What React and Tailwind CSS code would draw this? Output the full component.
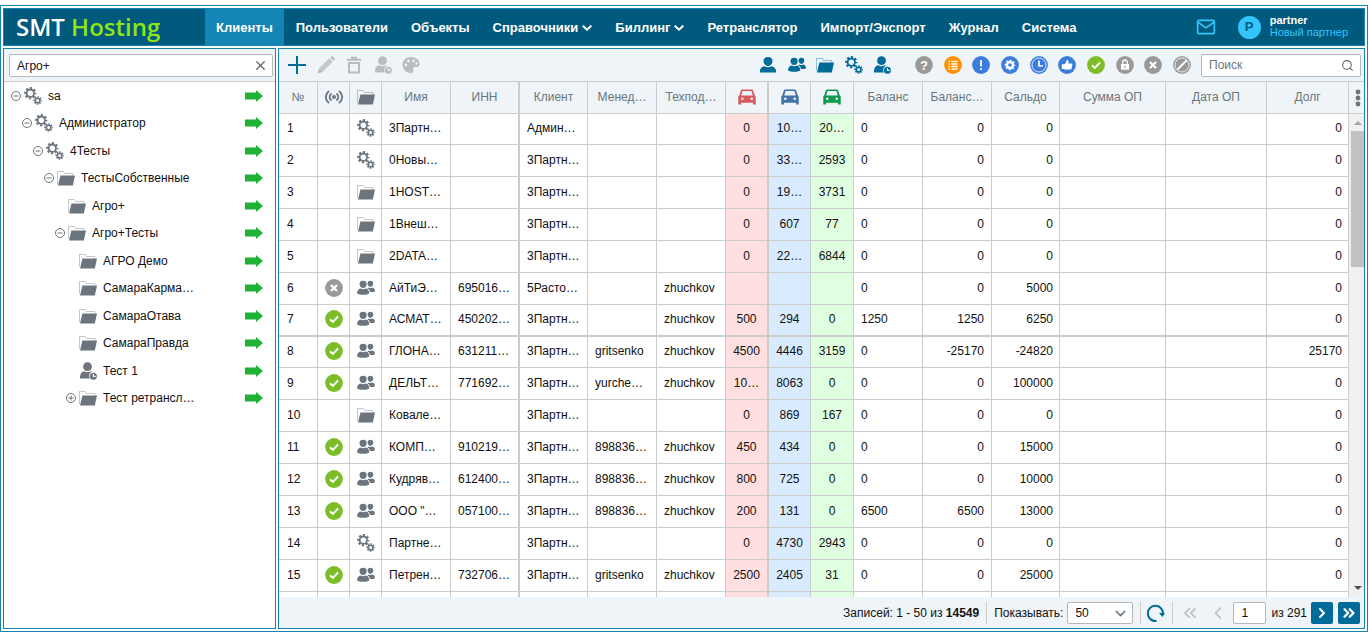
import { useState } from "react";
import { FiMail } from "react-icons/fi";
import {
  ChevronDown,
  ChevronLeft,
  ChevronRight,
  ChevronsLeft,
  ChevronsRight,
  Search,
  X,
} from "lucide-react";

const NAV = [
  { title: "Клиенты", active: true },
  { title: "Пользователи" },
  { title: "Объекты" },
  { title: "Справочники", menu: true },
  { title: "Биллинг", menu: true },
  { title: "Ретранслятор" },
  { title: "Импорт/Экспорт" },
  { title: "Журнал" },
  { title: "Система" },
];

const TREE = [
  { level: 0, icon: "gears", name: "sa", toggle: "minus" },
  { level: 1, icon: "gears", name: "Администратор", toggle: "minus" },
  { level: 2, icon: "gears", name: "4Тесты", toggle: "minus" },
  { level: 3, icon: "folder", name: "ТестыСобственные", toggle: "minus" },
  { level: 4, icon: "folder", name: "Агро+" },
  { level: 4, icon: "folder", name: "Агро+Тесты", toggle: "minus" },
  { level: 5, icon: "folder", name: "АГРО Демо" },
  { level: 5, icon: "folder", name: "СамараКарма…" },
  { level: 5, icon: "folder", name: "СамараОтава" },
  { level: 5, icon: "folder", name: "СамараПравда" },
  { level: 5, icon: "userClock", name: "Тест 1" },
  { level: 5, icon: "folder", name: "Тест ретрансл…", toggle: "plus" },
];

// status, icon, name, inn, client, manager, support, red, blue, green, balance, balance2, saldo, debt
const ROWS = [
  ["", "gears", "3Партн…", "", "Админ…", "", "", "0", "10…", "20…", "0", "0", "0", "0"],
  ["", "gears", "0Новы…", "", "3Партн…", "", "", "0", "33…", "2593", "0", "0", "0", "0"],
  ["", "folder", "1HOST…", "", "3Партн…", "", "", "0", "19…", "3731", "0", "0", "0", "0"],
  ["", "folder", "1Внеш…", "", "3Партн…", "", "", "0", "607", "77", "0", "0", "0", "0"],
  ["", "folder", "2DATA…", "", "3Партн…", "", "", "0", "22…", "6844", "0", "0", "0", "0"],
  ["off", "users", "АйТиЭ…", "695016…", "5Расто…", "", "zhuchkov", "", "", "", "0", "0", "5000", "0"],
  ["on", "users", "АСМАТ…", "450202…", "3Партн…", "", "zhuchkov", "500", "294", "0", "1250", "1250", "6250", "0"],
  ["on", "users", "ГЛОНА…", "631211…", "3Партн…", "gritsenko", "zhuchkov", "4500", "4446", "3159", "0", "-25170", "-24820", "25170"],
  ["on", "users", "ДЕЛЬТ…", "771692…", "3Партн…", "yurche…", "zhuchkov", "10…", "8063", "0", "0", "0", "100000", "0"],
  ["", "folder", "Ковале…", "", "3Партн…", "", "", "0", "869", "167", "0", "0", "0", "0"],
  ["on", "users", "КОМП…", "910219…", "3Партн…", "898836…", "zhuchkov", "450", "434", "0", "0", "0", "15000", "0"],
  ["on", "users", "Кудряв…", "612400…", "3Партн…", "898836…", "zhuchkov", "800", "725", "0", "0", "0", "10000", "0"],
  ["on", "users", "ООО \"…", "057100…", "3Партн…", "898836…", "zhuchkov", "200", "131", "0", "6500", "6500", "13000", "0"],
  ["", "gears", "Партне…", "", "3Партн…", "", "", "0", "4730", "2943", "0", "0", "0", "0"],
  ["on", "users", "Петрен…", "732706…", "3Партн…", "gritsenko", "zhuchkov", "2500", "2405", "31", "0", "0", "25000", "0"],
];

const COLS = [
  "w-[39px]",
  "w-[32px]",
  "w-[32px]",
  "w-[69px]",
  "w-[69px]",
  "w-[68px]",
  "w-[69px]",
  "w-[69px]",
  "w-[43px]",
  "w-[42px]",
  "w-[43px]",
  "w-[69px]",
  "w-[69px]",
  "w-[68px]",
  "w-[106px]",
  "w-[101px]",
  "w-[82px]",
];

function Svg({ children, className = "" }) {
  return (
    <svg
      viewBox="0 0 18 18"
      className={`block size-[18px] shrink-0 ${className}`}
      fill="currentColor"
      aria-hidden="true"
    >
      {children}
    </svg>
  );
}

function Gears({ className }) {
  return (
    <Svg className={className}>
      <g fill="none" stroke="currentColor">
        <circle cx="6.3" cy="6.2" r="3.7" strokeWidth="1.8" />
        <circle cx="6.3" cy="6.2" r="5.2" strokeWidth="1.900" strokeDasharray="2.2 1.884" strokeDashoffset="1.1" />
        <circle cx="13.600" cy="13.500" r="2.300" strokeWidth="1.600" />
        <circle cx="13.600" cy="13.500" r="3.500" strokeWidth="1.600" strokeDasharray="1.600 1.149" strokeDashoffset=".8" />
      </g>
    </Svg>
  );
}

function Folder({ className }) {
  return (
    <Svg className={className}>
      <path d="M.5 15V2.500h5.700l1.300 2h8.200v2" fill="none" stroke="currentColor" strokeOpacity=".4" />
      <path d="M3.400 6.600H18l-2.200 9.900H1z" />
    </Svg>
  );
}

function Users({ className }) {
  return (
    <Svg className={className}>
      <path d="M10.600 4.500c0-1.800 1-2.800 2.800-2.800s2.800 1 2.800 2.800-1 3.400-2.800 3.400-2.800-1.600-2.800-3.400z" />
      <path d="M11.300 8.400c1.200.8 2.800.8 4 0 1.700.3 2.700 1.700 2.700 3.800-1 .8-3.400 1-5 .8-.3-1.700-1.200-2.800-2.500-3.400z" />
      <path d="M2.500 5c0-2.100 1.300-3.300 3.600-3.300S9.700 2.900 9.700 5 8.400 9 6.100 9 2.500 7.100 2.500 5z" />
      <path d="M3.600 9.400c1.600 1 3.700 1 5.300 0 2.300.5 3.400 2.300 3.400 5-2.500 1.700-9.800 1.700-12.300 0 0-2.700 1.300-4.500 3.600-5z" />
    </Svg>
  );
}

function User({ className }) {
  return (
    <Svg className={className}>
      <path d="M4.500 5C4.500 2.400 6.300 1 9 1s4.500 1.400 4.500 4S11.400 10 9 10 4.500 7.600 4.500 5z" />
      <path d="M5.500 10.200c2 1.500 5 1.500 7 0 3.200.5 4.700 2.600 4.700 6.300H.8c0-3.700 1.500-5.800 4.700-6.300z" />
    </Svg>
  );
}

function UserClock({ className }) {
  return (
    <Svg className={className}>
      <circle cx="8.500" cy="4.700" r="4.400" />
      <path d="M5.200 9.200c2 1.400 4.600 1.400 6.600 0 .6.100 1 .3 1.500.6-1.900.5-3.100 2-3.100 4 0 1 .2 1.800.7 2.600H1c0-4.400 1.300-6.600 4.200-7.200z" />
      <path
        fillRule="evenodd"
        d="M14.400 10.700a3.500 3.500 0 1 0 0 7 3.500 3.500 0 0 0 0-7zm-.6 1.200h1.200v1.900h1.700V15h-2.900z"
      />
    </Svg>
  );
}

function Car({ className }) {
  return (
    <Svg className={className}>
      <path
        fillRule="evenodd"
        d="M4.500 1.500h9c.9 0 1.400.4 1.700 1.200l1.500 4.600 1 1.200v8h-2.700v-1.800H3v1.800H.3v-8l1-1.200 1.500-4.600c.3-.8.800-1.200 1.700-1.200zM4.600 3.100 3.200 7.400h11.600l-1.400-4.300zM4.300 9.400a1.300 1.300 0 1 0 0 2.600 1.300 1.300 0 0 0 0-2.600zm9.400 0a1.300 1.300 0 1 0 0 2.600 1.300 1.300 0 0 0 0-2.600z"
      />
    </Svg>
  );
}

function Signal() {
  return (
    <Svg>
      <circle cx="9" cy="9" r="2" />
      <g fill="none" stroke="currentColor" strokeWidth="1.800" strokeLinecap="round">
        <path d="M6 6a4 4 0 0 0 0 6M12 6a4 4 0 0 1 0 6M3.500 3.500C0 6.300 0 11.700 3.500 14.500M14.500 3.500c3.500 2.800 3.500 8.200 0 11" />
      </g>
    </Svg>
  );
}

function MenuArrow() {
  return (
    <svg viewBox="0 0 10 6" className="h-[6px] w-[10px]" fill="none" stroke="currentColor" strokeWidth="2" aria-hidden="true">
      <path d="m.7.7 4.300 4L9.300.7" />
    </svg>
  );
}

const BADGES = {
  question: (
    <text x="9" y="13.500" textAnchor="middle" fontSize="13" fontWeight="700" fill="#fff">
      ?
    </text>
  ),
  list: (
    <path d="M4.500 5.500h1.500M7.300 5.500h6.200M4.500 8h1.500M7.300 8h6.200M4.500 10.500h1.500M7.300 10.500h6.200M4.500 13h1.500M7.300 13h6.200" stroke="#fff" strokeWidth="1.400" />
  ),
  alert: <path d="M9 4v6.500M9 12.200v1.800" stroke="#fff" strokeWidth="1.800" />,
  gear: (
    <g fill="none" stroke="#fff">
      <circle cx="9" cy="9" r="3" strokeWidth="2.400" />
      <circle cx="9" cy="9" r="4.600" strokeWidth="1.400" strokeDasharray="1.900 1.713" strokeDashoffset=".95" />
    </g>
  ),
  clock: (
    <g fill="none" stroke="#fff">
      <circle cx="9" cy="9" r="7" strokeWidth=".8" />
      <path d="M9 4.500V10h3.800" strokeWidth="1.700" />
    </g>
  ),
  thumb: (
    <path d="M3.800 8.200h2.500c1.300-.8 2-2.200 2.300-4.200 1.900-.3 2.400 1.400 1.700 3.400h3.300c.7 0 .9.500.8 1.100l-.9 4c-.2.700-.5 1-1.200 1H6.500l-.6-.5H3.800z" fill="#fff" />
  ),
  check: <path d="m5 9.300 2.800 2.600L13 6.500" fill="none" stroke="#fff" strokeWidth="1.900" />,
  lock: (
    <g fill="none" stroke="#fff">
      <path d="M6.700 8.500V6.300a2.300 2.300 0 0 1 4.600 0v2.200" strokeWidth="1.300" />
      <path d="M5 8h8v5.700H5z" fill="#fff" stroke="none" />
      <path d="M9 9.800v2.200" stroke="#999" strokeWidth="1.200" />
    </g>
  ),
  cross: <path d="m6 6 6 6M12 6l-6 6" stroke="#fff" strokeWidth="2.200" />,
  ban: (
    <g fill="none" stroke="#fff">
      <circle cx="9" cy="9" r="7" strokeWidth=".8" />
      <path d="M13.500 4.500l-9 9" strokeWidth="1.800" />
    </g>
  ),
};

function Badge({ type, className }) {
  return (
    <Svg className={className}>
      <circle cx="9" cy="9" r="8.900" />
      {BADGES[type]}
    </Svg>
  );
}

const FILTERS = [
  { type: "question", color: "text-[#999999]", label: "Неизвестно" },
  { type: "list", color: "text-[#ff9100]", label: "Список" },
  { type: "alert", color: "text-[#3b7ddd]", label: "Внимание" },
  { type: "gear", color: "text-[#3b7ddd]", label: "Настройка" },
  { type: "clock", color: "text-[#3b7ddd]", label: "Ожидание" },
  { type: "thumb", color: "text-[#3b7ddd]", label: "Одобрено" },
  { type: "check", color: "text-[#7ebc28]", label: "Активен" },
  { type: "lock", color: "text-[#999999]", label: "Заблокирован" },
  { type: "cross", color: "text-[#999999]", label: "Отключен" },
  { type: "ban", color: "text-[#999999]", label: "Запрещен" },
];

const ICONS = { gears: Gears, folder: Folder, users: Users, user: User, userClock: UserClock };

function Header() {
  return (
    <header className="flex h-[38px] shrink-0 items-stretch border border-[#1485b1] bg-[#005a7d]">
      <div className="flex w-[201px] shrink-0 items-center pl-[12px] font-['Open_Sans',sans-serif] text-[24px] leading-6 font-semibold whitespace-pre">
        <span className="text-white">SMT </span>
        <span className="text-[#8fe512]">Hosting</span>
      </div>
      <nav className="flex gap-px text-[13px] font-bold text-white">
        {NAV.map((item) => (
          <button
            key={item.title}
            type="button"
            className={`flex items-center gap-[4px] px-[11px] pt-[2px] whitespace-nowrap ${item.active ? "bg-[#1485b4]" : ""}`}
          >
            {item.title}
            {item.menu && <MenuArrow />}
          </button>
        ))}
      </nav>
      <div className="ml-auto flex items-center pr-[16px]">
        <button type="button" aria-label="Сообщения" className="mr-[22px] text-[#33c5fb]">
          <FiMail className="size-[20px]" />
        </button>
        <div className="mr-[9px] flex size-[23px] items-center justify-center rounded-full bg-[#33c5fb] text-[13px] font-bold text-[#005a7d]">
          P
        </div>
        <div className="pb-[2px] text-[11px] leading-3">
          <p className="font-bold text-white">partner</p>
          <p className="text-[#33c5fb]">Новый партнер</p>
        </div>
      </div>
    </header>
  );
}

function TreeRow({ node }) {
  const Icon = ICONS[node.icon];
  return (
    <li className="flex items-center pr-[12px]" style={{ paddingLeft: 7 + node.level * 11 }}>
      <button type="button" aria-label="Развернуть" className="mr-[3px] size-[10px] shrink-0" disabled={!node.toggle}>
        {node.toggle && (
          <svg viewBox="0 0 10 10" className="block size-[10px]" fill="none" stroke="#6c757d">
            <circle cx="5" cy="5" r="4.500" />
            <path d={node.toggle === "plus" ? "M2.500 5h5M5 2.500v5" : "M2.500 5h5"} />
          </svg>
        )}
      </button>
      <Icon className="mr-[6px] text-[#6c757d]" />
      <span className="truncate">{node.name}</span>
      <button type="button" aria-label="Перейти" className="ml-auto">
        <svg viewBox="0 0 18 12" className="block h-[12px] w-[18px]" fill="#1fb336">
          <path d="M0 2.500h11V0l7 6-7 6V9.500H0z" />
        </svg>
      </button>
    </li>
  );
}

function Sidebar() {
  const [filter, setFilter] = useState("Агро+");
  return (
    <aside className="flex w-[273px] shrink-0 flex-col border border-[#1485b1] bg-white">
      <div className="h-[33px] shrink-0 border-b border-[#cccccc] bg-[#eef4f7] py-[5px] pr-[2px] pl-[5px]">
        <div className="flex h-[23px] items-center rounded-[2px] border border-[#b5b8bb] bg-white pr-[4px]">
          <input
            aria-label="Фильтр"
            value={filter}
            onChange={(e) => setFilter(e.target.value)}
            className="min-w-0 flex-1 px-[7px] outline-none"
          />
          <button type="button" aria-label="Очистить" onClick={() => setFilter("")}>
            <X className="size-[15px] text-[#5f676e]" />
          </button>
        </div>
      </div>
      <ul className="grid h-[330px] grid-rows-12">
        {TREE.map((node) => (
          <TreeRow key={node.name} node={node} />
        ))}
      </ul>
    </aside>
  );
}

function Toolbar() {
  return (
    <div className="flex h-[33px] shrink-0 items-center border-b border-[#cccccc] bg-[#eef4f7] pr-[3px] pl-[9px]">
      <div className="flex w-[132px] justify-between text-[#b9bdc0]">
        <button type="button" aria-label="Добавить" className="text-[#006b98]">
          <Svg>
            <path d="M8 0h2v8h8v2h-8v8H8v-8H0V8h8z" />
          </Svg>
        </button>
        <button type="button" aria-label="Изменить">
          <Svg>
            <path d="m12.200 2.500 3.300 3.300L5 16.300l-4.500 1.200L1.700 13zM13.200 1.500l.9-.9c.5-.5 1.200-.5 1.700 0l1.600 1.600c.5.500.5 1.200 0 1.700l-.9.900z" />
            <path d="M3 13.700 12.500 4.200M4.300 15 13.800 5.500" stroke="#eef4f7" strokeWidth=".6" />
          </Svg>
        </button>
        <button type="button" aria-label="Удалить">
          <Svg>
            <path fillRule="evenodd" d="M6 .8h6v2h4v2H2v-2h4zM3 6h12v11.500H3zm2 2v7.500h8V8z" />
          </Svg>
        </button>
        <button type="button" aria-label="Права">
          <UserClock />
        </button>
        <button type="button" aria-label="Цвет">
          <Svg>
            <path
              fillRule="evenodd"
              d="M9 1c4.700 0 8.500 2.900 8.500 6.900 0 2.200-1.600 3.300-3.600 3-2.100-.3-3 .6-2.700 2.300.3 1.900 0 3.800-2 3.800C4.800 17 .500 13.500.500 8.700.5 4 4.300 1 9 1zM4 7.500a1.400 1.400 0 1 0 0 2.800 1.400 1.400 0 0 0 0-2.800zm2.500-4a1.400 1.400 0 1 0 0 2.800 1.400 1.400 0 0 0 0-2.800zm5 0a1.400 1.400 0 1 0 0 2.800 1.400 1.400 0 0 0 0-2.800zM14.600 6.300a1.200 1.200 0 1 0 0 2.400 1.200 1.200 0 0 0 0-2.400z"
            />
          </Svg>
        </button>
      </div>
      <div className="ml-auto flex w-[132px] justify-between text-[#006b98]">
        {["user", "users", "folder", "gears", "userClock"].map((name) => {
          const Icon = ICONS[name];
          return (
            <button key={name} type="button" aria-label={name}>
              <Icon />
            </button>
          );
        })}
      </div>
      <div className="ml-[24px] flex w-[276px] justify-between">
        {FILTERS.map((f) => (
          <button key={f.type} type="button" aria-label={f.label} className={f.color}>
            <Badge type={f.type} />
          </button>
        ))}
      </div>
      <div className="ml-[10px] flex h-[23px] w-[160px] items-center rounded-[2px] border border-[#b5b8bb] bg-white pr-[6px]">
        <input
          aria-label="Поиск"
          placeholder="Поиск"
          className="min-w-0 flex-1 px-[7px] outline-none placeholder:text-[#6c757d]"
        />
        <Search className="size-[13px] text-[#5f676e]" />
      </div>
    </div>
  );
}

function Th({ children, className = "" }) {
  return (
    <th
      className={`h-[32px] overflow-hidden border-r border-b border-[#cccccc] bg-[#eef4f7] pt-0 pb-[2px] text-center font-normal whitespace-nowrap text-[#6c757d] ${className || "px-0"}`}
    >
      {children}
    </th>
  );
}

function Td({ children, className = "" }) {
  return (
    <td className={`overflow-hidden border-r border-b border-[#cccccc] pt-0 pb-[2px] whitespace-nowrap ${className}`}>
      {children}
    </td>
  );
}

function ClientRow({ row, number, className = "h-[32px]" }) {
  const [status, icon, name, inn, client, manager, support, red, blue, green, balance, balance2, saldo, debt] = row;
  const Icon = ICONS[icon];
  return (
    <tr className={className}>
      <Td className="px-[8px]">{number}</Td>
      <Td className="px-[7px]">
        {status === "on" && <Badge type="check" className="text-[#7ebc28]" />}
        {status === "off" && <Badge type="cross" className="text-[#999999]" />}
      </Td>
      <Td className="px-[7px]">{Icon && <Icon className="text-[#6c757d]" />}</Td>
      <Td className="px-[7px]">{name}</Td>
      <Td className="border-r-2 px-[7px]">{inn}</Td>
      <Td className="px-[7px]">{client}</Td>
      <Td className="px-[7px]">{manager}</Td>
      <Td className="px-[7px]">{support}</Td>
      <Td className="border-r-2 bg-[#ffdfe0] px-0 text-center">{red}</Td>
      <Td className="bg-[#d9ecff] px-0 text-center">{blue}</Td>
      <Td className="bg-[#e0ffe0] px-0 text-center">{green}</Td>
      <Td className="px-[7px]">{balance}</Td>
      <Td className="px-[7px] text-right">{balance2}</Td>
      <Td className="px-[6px] text-right">{saldo}</Td>
      <Td />
      <Td />
      <Td className="px-[6px] text-right">{debt}</Td>
    </tr>
  );
}

function ClientsTable() {
  return (
    <div className="flex min-h-0 flex-1">
      <div className="min-w-0 flex-1 overflow-hidden">
        <table className="w-full table-fixed border-separate border-spacing-0">
          <colgroup>
            {COLS.map((width, index) => (
              <col key={index} className={width} />
            ))}
          </colgroup>
          <thead>
            <tr>
              <Th>№</Th>
              <Th className="px-[7px]">
                <Signal />
              </Th>
              <Th className="px-[7px]">
                <Folder />
              </Th>
              <Th>Имя</Th>
              <Th className="border-r-2 px-0">ИНН</Th>
              <Th>Клиент</Th>
              <Th>Менед…</Th>
              <Th>Техпод…</Th>
              <Th className="border-r-2 px-0">
                <Car className="mx-auto text-[#d9585b]" />
              </Th>
              <Th>
                <Car className="mx-auto text-[#4474a8]" />
              </Th>
              <Th>
                <Car className="mx-auto text-[#0a9a48]" />
              </Th>
              <Th>Баланс</Th>
              <Th>Баланс…</Th>
              <Th>Сальдо</Th>
              <Th>Сумма ОП</Th>
              <Th>Дата ОП</Th>
              <Th>Долг</Th>
            </tr>
          </thead>
          <tbody>
            {ROWS.map((row, index) => (
              <ClientRow
                key={index}
                row={row}
                number={index + 1}
                className={index % 7 === 0 && index < 14 ? "h-[31px]" : index === 6 ? "h-[32px] *:border-b-2" : "h-[32px]"}
              />
            ))}
            <ClientRow row={Array(14).fill("")} number="" />
          </tbody>
        </table>
      </div>
      <div className="flex w-[15px] shrink-0 flex-col bg-[#f0f0f0]">
        <button
          type="button"
          aria-label="Столбцы"
          className="flex h-[32px] shrink-0 items-center justify-center border-b border-[#cccccc] bg-[#eef4f7] pl-[2px]"
        >
          <svg viewBox="0 0 6 18" className="h-[18px] w-[6px]" fill="#6c757d">
            <circle cx="3" cy="3" r="2.400" />
            <circle cx="3" cy="9" r="2.400" />
            <circle cx="3" cy="15" r="2.400" />
          </svg>
        </button>
        <svg viewBox="0 0 15 17" className="h-[17px] w-[15px] shrink-0" fill="#a3a3a3">
          <path d="M5 11h8L9 7z" />
        </svg>
        <div className="ml-[2px] h-[136px] bg-[#c1c1c1]" />
        <svg viewBox="0 0 15 17" className="mt-auto h-[17px] w-[15px] shrink-0" fill="#505050">
          <path d="M5 6h8l-4 4z" />
        </svg>
      </div>
    </div>
  );
}

function Footer() {
  const [size, setSize] = useState("50");
  const [page, setPage] = useState("1");
  return (
    <footer className="flex h-[31px] shrink-0 items-center justify-end bg-[#eef4f7] pr-[4px] whitespace-nowrap">
      <p>
        Записей: 1 - 50 из <b>14549</b>
      </p>
      <span className="mx-[7px] h-[22px] w-px bg-[#cccccc]" />
      <label htmlFor="page-size">Показывать:</label>
      <div className="relative ml-[4px]">
        <select
          id="page-size"
          value={size}
          onChange={(e) => setSize(e.target.value)}
          className="block h-[22px] w-[66px] appearance-none rounded-[2px] border border-[#b5b8bb] bg-white pl-[7px] outline-none"
        >
          <option>50</option>
          <option>100</option>
        </select>
        <ChevronDown
          className="pointer-events-none absolute top-[3px] right-[4px] size-[17px] text-[#6c757d]"
          strokeWidth={2}
        />
      </div>
      <span className="mr-[6px] ml-[7px] h-[22px] w-px bg-[#cccccc]" />
      <button type="button" aria-label="Обновить" className="text-[#006b98]">
        <Svg>
          <path d="M9.500 16.900A7.600 7.600 0 1 1 16 9.500" fill="none" stroke="currentColor" strokeWidth="2" />
          <path d="M12 9h6l-2.500 4z" />
        </Svg>
      </button>
      <span className="mx-[7px] h-[22px] w-px bg-[#cccccc]" />
      <button type="button" aria-label="Первая" className="text-[#b9bdc0]">
        <ChevronsLeft className="size-[20px]" />
      </button>
      <button type="button" aria-label="Назад" className="mr-[5px] ml-[8px] text-[#b9bdc0]">
        <ChevronLeft className="size-[20px]" />
      </button>
      <input
        aria-label="Страница"
        value={page}
        onChange={(e) => setPage(e.target.value)}
        className="h-[22px] w-[33px] rounded-[2px] border border-[#b5b8bb] bg-white px-[7px] outline-none"
      />
      <span className="mr-[4px] ml-[5px]">из 291</span>
      <button type="button" aria-label="Вперед" className="mr-[5px] flex size-[22px] items-center justify-center rounded-[2px] bg-[#006b98] text-white">
        <ChevronRight className="size-[16px]" strokeWidth={3} />
      </button>
      <button type="button" aria-label="Последняя" className="flex size-[22px] items-center justify-center rounded-[2px] bg-[#006b98] text-white">
        <ChevronsRight className="size-[18px]" strokeWidth={3} />
      </button>
    </footer>
  );
}

export default function App() {
  return (
    <div className="h-screen bg-white pt-[5px] pr-px pb-[2px] font-['Liberation_Sans',Arial,sans-serif] text-[12px] leading-4 text-[#111111]">
      <div className="flex h-full flex-col gap-[2px] border border-[#1485b1] p-[2px]">
        <Header />
        <div className="flex min-h-0 flex-1 gap-[2px]">
          <Sidebar />
          <main className="flex min-w-0 flex-1 flex-col border border-[#1485b1]">
            <Toolbar />
            <ClientsTable />
            <Footer />
          </main>
        </div>
      </div>
    </div>
  );
}
